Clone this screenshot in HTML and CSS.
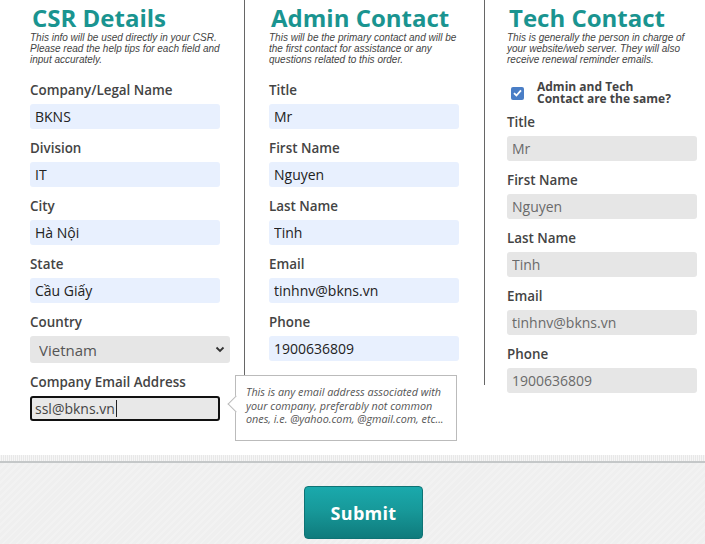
FILE: index.html
```html
<!DOCTYPE html>
<html lang="en">
<head>
<meta charset="utf-8">
<title>CSR Details</title>
<link rel="stylesheet" href="styles.css">
</head>
<body>
<main class="form-grid">
  <section class="col col-csr">
    <h1 class="col-title">CSR Details</h1>
    <p class="col-desc">This info will be used directly in your CSR. Please read the help tips for each field and input accurately.</p>
    <div class="field">
      <label class="field-label">Company/Legal Name</label>
      <input class="field-input autofill" type="text" value="BKNS" readonly>
    </div>
    <div class="field">
      <label class="field-label">Division</label>
      <input class="field-input autofill" type="text" value="IT" readonly>
    </div>
    <div class="field">
      <label class="field-label">City</label>
      <input class="field-input autofill" type="text" value="Hà Nội" readonly>
    </div>
    <div class="field">
      <label class="field-label">State</label>
      <input class="field-input autofill" type="text" value="Cầu Giấy" readonly>
    </div>
    <div class="field">
      <label class="field-label">Country</label>
      <div class="select-wrap">
        <select class="field-select">
          <option>Vietnam</option>
        </select>
        <svg class="select-arrow" width="10" height="7" viewBox="0 0 10 7"><path d="M1.5 1.5 L5 5 L8.5 1.5" fill="none" stroke="#333" stroke-width="1.8"/></svg>
      </div>
    </div>
    <div class="field field-last">
      <label class="field-label">Company Email Address</label>
      <div class="email-wrap">
        <div class="field-input focused"><span>ssl@bkns.vn</span><span class="caret"></span></div>
        <div class="tooltip">This is any email address associated with your company, preferably not common ones, i.e. @yahoo.com, @gmail.com, etc...</div>
      </div>
    </div>
  </section>

  <section class="col col-admin">
    <h1 class="col-title">Admin Contact</h1>
    <p class="col-desc">This will be the primary contact and will be the first contact for assistance or any questions related to this order.</p>
    <div class="field">
      <label class="field-label">Title</label>
      <input class="field-input autofill" type="text" value="Mr" readonly>
    </div>
    <div class="field">
      <label class="field-label">First Name</label>
      <input class="field-input autofill" type="text" value="Nguyen" readonly>
    </div>
    <div class="field">
      <label class="field-label">Last Name</label>
      <input class="field-input autofill" type="text" value="Tinh" readonly>
    </div>
    <div class="field">
      <label class="field-label">Email</label>
      <input class="field-input autofill" type="text" value="tinhnv@bkns.vn" readonly>
    </div>
    <div class="field field-last">
      <label class="field-label">Phone</label>
      <input class="field-input autofill" type="text" value="1900636809" readonly>
    </div>
  </section>

  <section class="col col-tech">
    <h1 class="col-title">Tech Contact</h1>
    <p class="col-desc">This is generally the person in charge of your website/web server. They will also receive renewal reminder emails.</p>
    <div class="same-row">
      <span class="checkbox">
        <svg width="9" height="8" viewBox="0 0 9 8"><path d="M1 4.2 L3.4 6.5 L8 1.3" fill="none" stroke="#fff" stroke-width="1.8"/></svg>
      </span>
      <span class="same-label">Admin and Tech<br>Contact are the same?</span>
    </div>
    <div class="field">
      <label class="field-label">Title</label>
      <input class="field-input disabled" type="text" value="Mr" disabled>
    </div>
    <div class="field">
      <label class="field-label">First Name</label>
      <input class="field-input disabled" type="text" value="Nguyen" disabled>
    </div>
    <div class="field">
      <label class="field-label">Last Name</label>
      <input class="field-input disabled" type="text" value="Tinh" disabled>
    </div>
    <div class="field">
      <label class="field-label">Email</label>
      <input class="field-input disabled" type="text" value="tinhnv@bkns.vn" disabled>
    </div>
    <div class="field field-last">
      <label class="field-label">Phone</label>
      <input class="field-input disabled" type="text" value="1900636809" disabled>
    </div>
  </section>
</main>
<div class="shadow-band"></div>
<footer class="footer">
  <button class="submit-btn" type="button">Submit</button>
</footer>
</body>
</html>
```

FILE: styles.css
```css
* {
  box-sizing: border-box;
}

html, body {
  margin: 0;
  padding: 0;
  background: #ffffff;
  font-family: "Open Sans", "DejaVu Sans", sans-serif;
}

.form-grid {
  display: grid;
  grid-template-columns: 245px 240px 1fr;
  align-items: start;
  height: 455px;
}

.col-csr {
  border-right: 1px solid #666;
  padding: 4px 24px 20px 30px;
}

.col-admin {
  border-right: 1px solid #666;
  padding: 4px 24px 24px 24px;
}

.col-tech {
  padding: 4px 8px 0 22px;
}

.col-title {
  margin: 0;
  padding-left: 2px;
  font-size: 24px;
  line-height: 28px;
  font-weight: 700;
  color: #1a9490;
  white-space: nowrap;
}

.col-desc {
  margin: 0 0 16px 0;
  width: 192px;
  font-family: "Liberation Sans", Arial, sans-serif;
  font-style: italic;
  font-size: 10px;
  line-height: 11px;
  color: #444;
}

.field {
  display: flex;
  flex-direction: column;
  width: 190px;
  margin-bottom: 10px;
}

.field-last {
  margin-bottom: 0;
}

.field-label {
  font-size: 13.4px;
  line-height: 18px;
  font-weight: 600;
  color: #444;
  margin-bottom: 5px;
  white-space: nowrap;
}

.field-input {
  display: block;
  width: 190px;
  height: 25px;
  margin: 0;
  padding: 0 5px;
  border: none;
  border-radius: 3px;
  font-family: "Open Sans", sans-serif;
  font-size: 14px;
  color: #222;
  outline: none;
}

.autofill {
  background: #e8f0fe;
}

.disabled {
  background: #e6e6e6;
  color: #6a6a6a;
  -webkit-text-fill-color: #6a6a6a;
  opacity: 1;
}

.select-wrap {
  position: relative;
  width: 200px;
  height: 27px;
}

.field-select {
  appearance: none;
  -webkit-appearance: none;
  width: 200px;
  height: 27px;
  margin: 0;
  padding: 0 9px;
  border: none;
  border-radius: 3px;
  background: #e6e6e6;
  font-family: "Open Sans", sans-serif;
  font-size: 15px;
  color: #555;
}

.select-arrow {
  position: absolute;
  right: 5px;
  top: 10px;
  pointer-events: none;
}

.email-wrap {
  position: relative;
}

.focused {
  display: flex;
  align-items: center;
  border: 2px solid #111;
  border-radius: 3px;
  background: #e8e8e8;
  color: #444;
  padding: 0 3px;
  line-height: 21px;
}

.caret {
  display: inline-block;
  width: 1px;
  height: 17px;
  background: #222;
  margin-left: 1px;
}

.tooltip {
  position: absolute;
  left: 205px;
  top: -21px;
  width: 222px;
  height: 66px;
  padding: 9px 12px 0 10px;
  border: 1px solid #bbb;
  background: #fff;
  font-style: italic;
  font-size: 10.8px;
  line-height: 13.5px;
  color: #555;
}

.tooltip::before {
  content: "";
  position: absolute;
  left: -6px;
  top: 22px;
  width: 11px;
  height: 11px;
  background: #fff;
  border-left: 1px solid #bbb;
  border-bottom: 1px solid #bbb;
  transform: rotate(45deg);
}

.same-row {
  display: flex;
  align-items: center;
  height: 24px;
  margin-bottom: 8px;
  padding-left: 4px;
}

.checkbox {
  display: flex;
  align-items: center;
  justify-content: center;
  width: 13px;
  height: 13px;
  border-radius: 2px;
  background: #4a7ec6;
  margin-right: 13px;
}

.same-label {
  font-size: 12px;
  line-height: 12px;
  font-weight: 700;
  color: #444;
}

.shadow-band {
  height: 6px;
  background: repeating-linear-gradient(90deg, #f6f6f6 0 1px, #e8e8e8 1px 2px);
}

.footer {
  display: flex;
  justify-content: center;
  padding: 23px 0 0 22px;
  height: 83px;
  border-top: 2px solid #c4c7c8;
  background-color: #efefef;
  background-image: repeating-linear-gradient(135deg, #efefef 0 3px, #f2f2f2 3px 5px);
}

.submit-btn {
  width: 119px;
  height: 53px;
  border: 1px solid #0e7375;
  border-radius: 4px;
  background: linear-gradient(#1aa9ac, #17999a 45%, #0f7b7c);
  color: #fff;
  font-family: "Open Sans", sans-serif;
  font-weight: 700;
  font-size: 18px;
  letter-spacing: 0.3px;
  cursor: pointer;
}
```
